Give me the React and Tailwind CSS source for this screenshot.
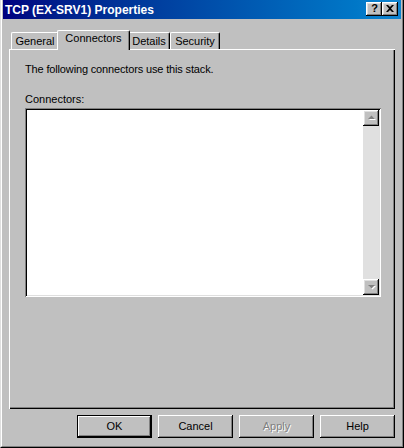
import React from 'react';

const raised = 'shadow-[inset_-1px_-1px_#000,inset_1px_1px_#fff,inset_-2px_-2px_#808080,inset_2px_2px_#dfdfdf]';

const TitleButton = ({ children }) => (
  <div className={`w-[16px] h-[14px] bg-[#c0c0c0] flex items-center justify-center ${raised}`}>
    {children}
  </div>
);

const Tab = ({ label, selected, width }) => {
  if (selected) {
    return (
      <div
        className="relative z-10 -mx-[2px] -mb-px h-[20px] bg-[#c0c0c0] border-l border-t border-white border-r border-r-black rounded-t-[2px] shadow-[inset_-1px_0_#808080] flex items-start justify-center pt-[2px]"
        style={{ width: width + 4 }}
      >
        {label}
      </div>
    );
  }
  return (
    <div
      className="h-[17px] bg-[#c0c0c0] border-l border-t border-white border-r border-r-black rounded-t-[2px] shadow-[inset_-1px_0_#808080] flex items-start justify-center pt-[3px]"
      style={{ width }}
    >
      {label}
    </div>
  );
};

const Arrow = ({ up }) => (
  <svg width="9" height="6" viewBox="0 0 9 6">
    {up ? (
      <>
        <path d="M2 5h7L5.5 1.5z" fill="#fff" />
        <path d="M1 4h7L4.5 0.5z" fill="#808080" />
      </>
    ) : (
      <>
        <path d="M2 2h7L5.5 5.5z" fill="#fff" />
        <path d="M1 1h7L4.5 4.5z" fill="#808080" />
      </>
    )}
  </svg>
);

const Button = ({ label, isDefault, disabled }) => (
  <div
    className={`w-[75px] h-[23px] bg-[#c0c0c0] flex items-center justify-center ${
      isDefault
        ? 'border border-black shadow-[inset_-1px_-1px_#000,inset_1px_1px_#fff,inset_-2px_-2px_#808080]'
        : 'shadow-[inset_-1px_-1px_#000,inset_1px_1px_#fff,inset_-2px_-2px_#808080]'
    } ${disabled ? 'text-[#808080] [text-shadow:1px_1px_0_#fff]' : 'text-black'}`}
  >
    {label}
  </div>
);

export default function App() {
  return (
    <div
      className="w-[404px] h-[448px] bg-[#c0c0c0] text-[11px] text-black leading-none border-l border-l-[#dfdfdf] border-r border-b border-black"
      style={{ fontFamily: '"Liberation Sans", Arial, sans-serif' }}
    >
      <div className="h-full flex flex-col border-l border-l-white border-r border-b border-[#808080] pl-px pr-px pb-px">
        {/* title bar */}
        <div className="h-[19px] shrink-0 bg-gradient-to-r from-[#000080] to-[#1084d0] flex items-center pl-[2px] pr-[3px]">
          <span className="text-white font-bold text-[12px] flex-1">TCP (EX-SRV1) Properties</span>
          <div className="flex mb-[2px]">
            <TitleButton>
              <span className="font-bold text-[11px] leading-none pl-px">?</span>
            </TitleButton>
            <TitleButton>
              <svg width="8" height="7" viewBox="0 0 8 7">
                <path d="M0 0h2l2 2 2-2h2L5 3.5 8 7H6L4 5 2 7H0l3-3.5z" fill="#000" />
              </svg>
            </TitleButton>
          </div>
        </div>

        {/* body */}
        <div className="flex-1 flex flex-col pt-[11px] px-[6px] pb-[7px]">
          <div className="h-[19px] flex items-end pl-[2px]">
            <Tab label="General" width={48} />
            <Tab label="Connectors" width={69} selected />
            <Tab label="Details" width={42} />
            <Tab label="Security" width={50} />
          </div>

          <div className="h-[360px] shadow-[inset_1px_1px_#fff,inset_-1px_-1px_#000,inset_-2px_-2px_#808080] pl-[16px] pr-[14px] pt-[15px]">
            <p className="tracking-[-0.15px]">The following connectors use this stack.</p>
            <p className="mt-[19px]">Connectors:</p>
            <div className="mt-[3px] h-[189px] bg-white p-[2px] flex justify-end shadow-[inset_1px_1px_#808080,inset_-1px_-1px_#fff,inset_2px_2px_#000,inset_-2px_-2px_#dfdfdf]">
              <div className="w-[16px] bg-[#e0e0e0] flex flex-col justify-between">
                <div className={`h-[16px] bg-[#c0c0c0] flex items-center justify-center ${raised}`}>
                  <Arrow up />
                </div>
                <div className={`h-[16px] bg-[#c0c0c0] flex items-center justify-center ${raised}`}>
                  <Arrow />
                </div>
              </div>
            </div>
          </div>

          <div className="mt-[6px] flex justify-end gap-[6px]">
            <Button label="OK" isDefault />
            <Button label="Cancel" />
            <Button label="Apply" disabled />
            <Button label="Help" />
          </div>
        </div>
      </div>
    </div>
  );
}
